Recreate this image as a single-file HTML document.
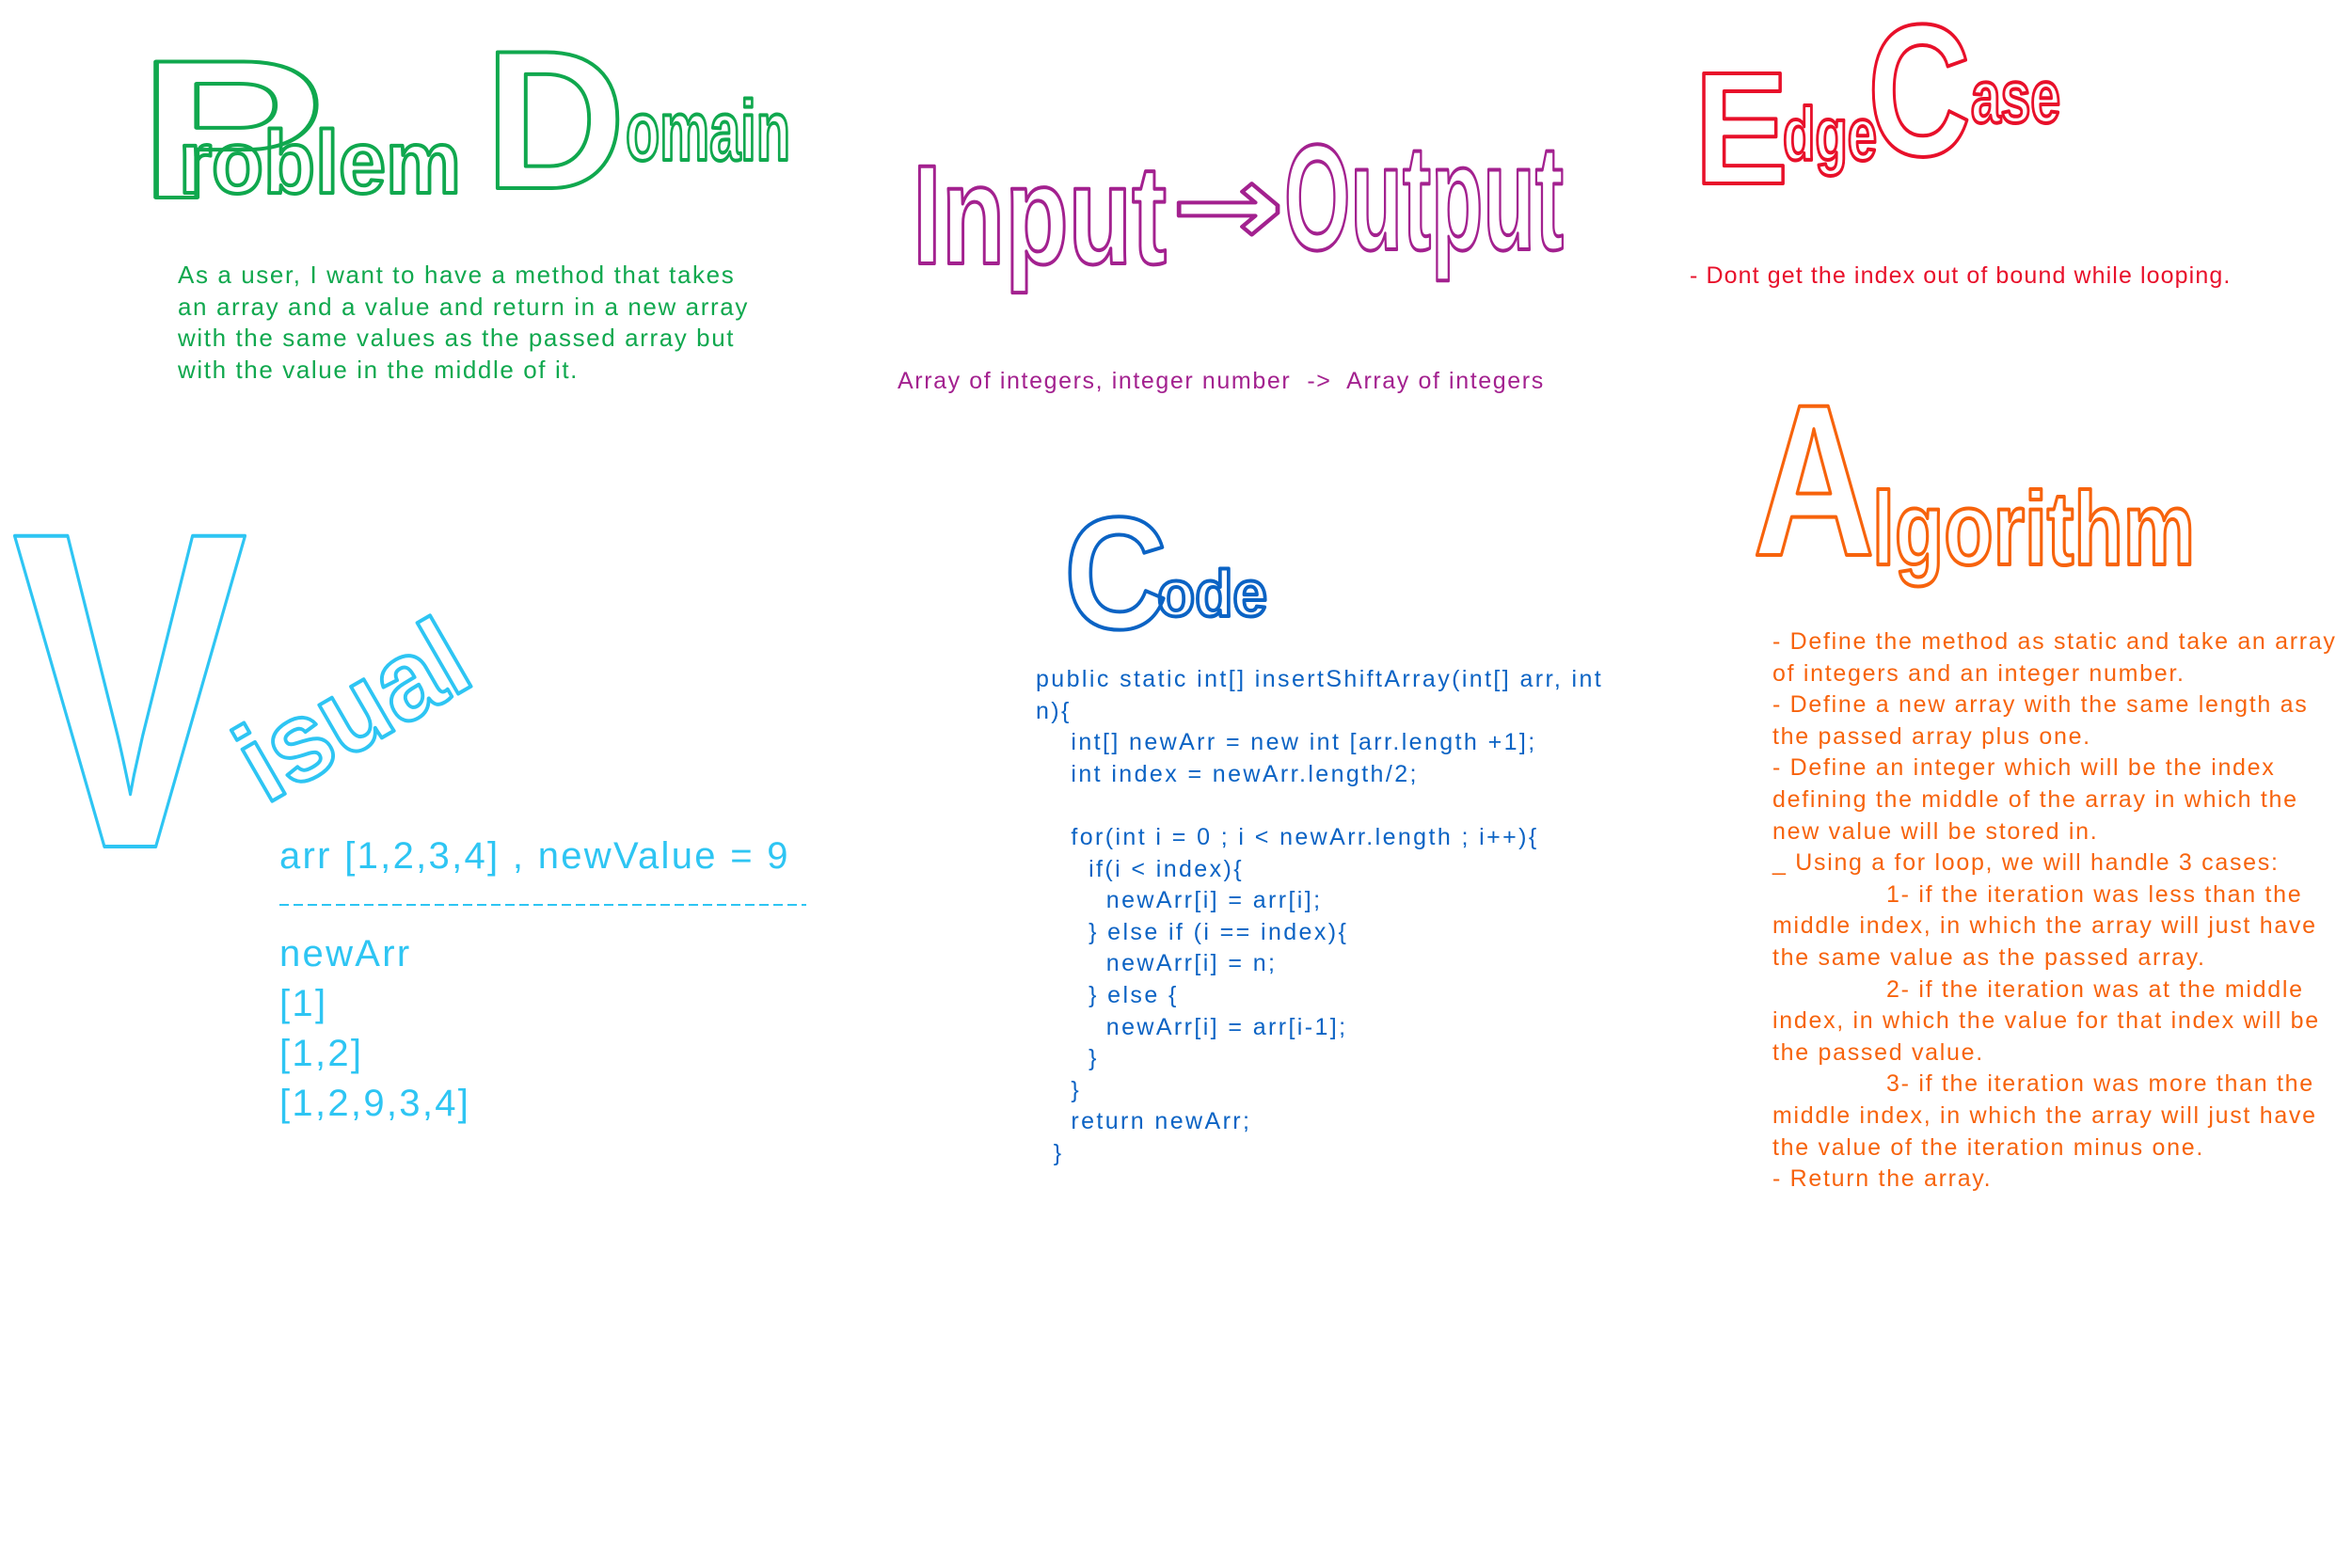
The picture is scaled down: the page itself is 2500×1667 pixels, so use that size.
<!DOCTYPE html>
<html><head><meta charset="utf-8"><style>
html,body{margin:0;padding:0;background:#fff;width:2500px;height:1667px;overflow:hidden;position:relative;font-family:"Liberation Sans",sans-serif}
.t{position:absolute;font-size:25px;line-height:33.6px;white-space:pre}
svg{position:absolute;left:0;top:0}
</style></head><body>
<svg width="2500" height="1667" xmlns="http://www.w3.org/2000/svg" font-family="Liberation Sans, sans-serif" font-weight="bold" fill="none" stroke-width="4" stroke-linejoin="round">
<text x="146" y="210" font-size="210" stroke="#10a84e" textLength="200" lengthAdjust="spacingAndGlyphs">P</text>
<text x="190" y="205" font-size="95" stroke="#10a84e" textLength="300" lengthAdjust="spacingAndGlyphs">roblem</text>
<text x="515" y="200" font-size="210" stroke="#10a84e" textLength="150" lengthAdjust="spacingAndGlyphs">D</text>
<text x="665" y="170" font-size="90" stroke="#10a84e" textLength="175" lengthAdjust="spacingAndGlyphs">omain</text>
<text x="970" y="280" font-size="150" stroke="#a3218f" textLength="270" lengthAdjust="spacingAndGlyphs">Input</text>
<text x="1245" y="260" font-size="120" stroke="#a3218f" font-family="DejaVu Sans" textLength="120" lengthAdjust="spacingAndGlyphs">→</text>
<text x="1365" y="265" font-size="160" stroke="#a3218f" textLength="297" lengthAdjust="spacingAndGlyphs">Output</text>
<text x="1801" y="195" font-size="170" stroke="#e8102a" textLength="100" lengthAdjust="spacingAndGlyphs">E</text>
<text x="1895" y="170" font-size="80" stroke="#e8102a" textLength="100" lengthAdjust="spacingAndGlyphs">dge</text>
<text x="1985" y="165" font-size="200" stroke="#e8102a" textLength="110" lengthAdjust="spacingAndGlyphs">C</text>
<text x="2095" y="130" font-size="80" stroke="#e8102a" textLength="95" lengthAdjust="spacingAndGlyphs">ase</text>
<text x="13" y="900" font-size="480" stroke="#2ec5f3" textLength="250" lengthAdjust="spacingAndGlyphs">V</text>
<text x="230" y="800" font-size="120" stroke="#2ec5f3" textLength="260" lengthAdjust="spacingAndGlyphs" transform="rotate(-30 360 730)">isual</text>
<text x="1131" y="668" font-size="170" stroke="#0b63c4" textLength="110" lengthAdjust="spacingAndGlyphs">C</text>
<text x="1230" y="655" font-size="70" stroke="#0b63c4" textLength="117" lengthAdjust="spacingAndGlyphs">ode</text>
<text x="1863" y="590" font-size="230" stroke="#f7630c" textLength="130" lengthAdjust="spacingAndGlyphs">A</text>
<text x="1990" y="600" font-size="110" stroke="#f7630c" textLength="343" lengthAdjust="spacingAndGlyphs">lgorithm</text>
<line x1="297" y1="962" x2="857" y2="962" stroke="#2ec5f3" stroke-width="2" stroke-dasharray="10 5"/>
</svg>
<div class="t" style="left:189px;top:276px;color:#10a84e;font-size:26px;letter-spacing:1.6px">As a user, I want to have a method that takes
an array and a value and return in a new array
with the same values as the passed array but
with the value in the middle of it.</div>
<div class="t" style="left:954px;top:389px;color:#a3218f;letter-spacing:1.6px">Array of integers, integer number  -&gt;  Array of integers</div>
<div class="t" style="left:1796px;top:277px;color:#e8102a;letter-spacing:1.1px">- Dont get the index out of bound while looping.</div>
<div class="t" style="left:297px;top:884px;color:#2ec5f3;font-size:40px;line-height:53px;letter-spacing:2.3px">arr [1,2,3,4] , newValue = 9</div>
<div class="t" style="left:297px;top:988px;color:#2ec5f3;font-size:40px;line-height:53px;letter-spacing:2.3px">newArr
[1]
[1,2]
[1,2,9,3,4]</div>
<div class="t" style="left:1101px;top:706px;color:#0b63c4;letter-spacing:2.4px">public static int[] insertShiftArray(int[] arr, int
n){
    int[] newArr = new int [arr.length +1];
    int index = newArr.length/2;

    for(int i = 0 ; i &lt; newArr.length ; i++){
      if(i &lt; index){
        newArr[i] = arr[i];
      } else if (i == index){
        newArr[i] = n;
      } else {
        newArr[i] = arr[i-1];
      }
    }
    return newArr;
  }</div>
<div class="t" style="left:1884px;top:666px;color:#f7630c;letter-spacing:1.7px">- Define the method as static and take an array
of integers and an integer number.
- Define a new array with the same length as
the passed array plus one.
- Define an integer which will be the index
defining the middle of the array in which the
new value will be stored in.
_ Using a for loop, we will handle 3 cases:
              1- if the iteration was less than the
middle index, in which the array will just have
the same value as the passed array.
              2- if the iteration was at the middle
index, in which the value for that index will be
the passed value.
              3- if the iteration was more than the
middle index, in which the array will just have
the value of the iteration minus one.
- Return the array.</div>
</body></html>
